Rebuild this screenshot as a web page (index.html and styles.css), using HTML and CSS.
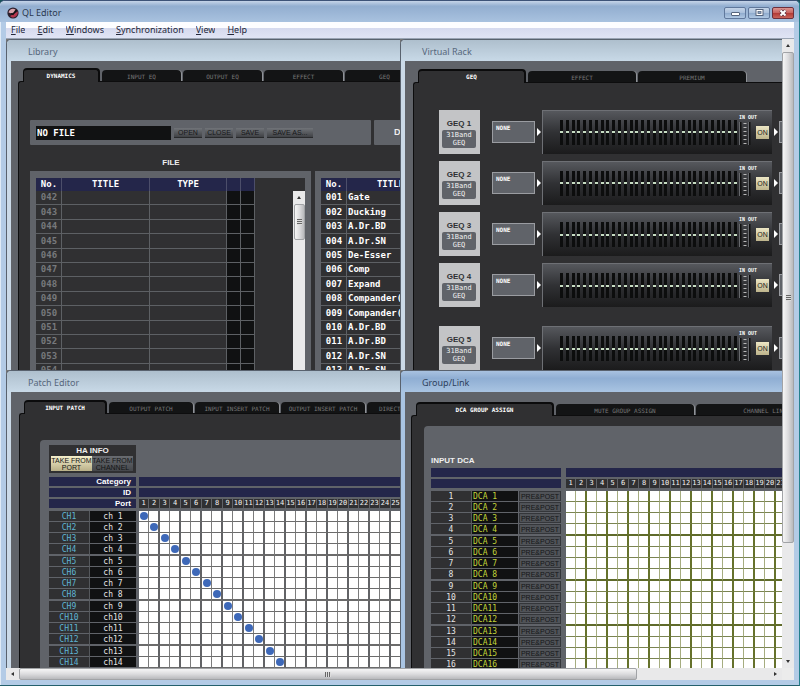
FILE: index.html
```html
<!DOCTYPE html>
<html lang="en">
<head>
<meta charset="utf-8">
<title>QL Editor</title>
<link rel="stylesheet" href="styles.css">
</head>
<body>
<div class="frame">
  <header class="titlebar">
    <svg class="app-icon" viewBox="0 0 12 12"><circle cx="6" cy="6" r="5.6" fill="#2b1f2c"/><path d="M1.500 5.500C2 2 6 .8 8.500 2.500L6.500 5.500 4.500 6.500Z" fill="#d9a3ac"/><path d="M3 9L7.500 6.500 10.800 4.500C11.200 8 8.500 11 5 10.500Z" fill="#b5344c"/><path d="M4 6.500L6 7.500 9.500 3" fill="none" stroke="#111" stroke-width="1.200"/></svg>
    <h1>QL Editor</h1>
    <div class="controls">
      <button class="ctl" aria-label="Minimize"><svg viewBox="0 0 20 10"><rect x="6.500" y="4.500" width="8" height="3" rx=".5" fill="#fff" stroke="#56657e"/></svg></button>
      <button class="ctl" aria-label="Maximize"><svg viewBox="0 0 20 10"><rect x="7" y="1.500" width="7" height="6" fill="#fff" stroke="#56657e"/><rect x="9" y="3.500" width="3" height="2" fill="#8fa6c4" stroke="#56657e" stroke-width=".8"/></svg></button>
      <button class="ctl close" aria-label="Close"><svg viewBox="0 0 20 10"><path d="M7.500 2.500L12.500 7.500M12.500 2.500L7.500 7.500" stroke="#5a3040" stroke-width="3.400"/><path d="M7.500 2.500L12.500 7.500M12.500 2.500L7.500 7.500" stroke="#fff" stroke-width="2"/></svg></button>
    </div>
  </header>
  <nav class="menu">
    <button><u>F</u>ile</button><button><u>E</u>dit</button><button><u>W</u>indows</button><button><u>S</u>ynchronization</button><button><u>V</u>iew</button><button><u>H</u>elp</button>
  </nav>
  <div class="workarea">
    <main class="mdi">
      <section class="win library">
        <h2>Library</h2>
        <div class="content">
          <div class="tabs"><button class="on">DYNAMICS</button><button>INPUT EQ</button><button>OUTPUT EQ</button><button>EFFECT</button><button>GEQ</button></div>
          <div class="body">
            <div class="filebar">
              <div class="bar file-group">
                <input aria-label="File name" value="NO FILE" readonly>
                <button>OPEN</button><button>CLOSE</button><button>SAVE</button><button class="wide">SAVE AS...</button>
              </div>
              <div class="bar device">D</div>
            </div>
            <h3>FILE</h3>
            <div class="lists">
              <div class="list-panel">
                <div class="list-inner">
                  <table class="list empty">
                    <colgroup><col class="no"><col class="ti"><col class="ty"><col class="mk"><col class="mk"></colgroup>
                    <thead><tr><th>No.</th><th>TITLE</th><th>TYPE</th><th></th><th></th></tr></thead>
                    <tbody id="fileRows"></tbody>
                  </table>
                  <div class="vscroll small"><span class="arrow up"></span><span class="thumb"></span></div>
                </div>
              </div>
              <div class="list-panel second">
                <table class="list full">
                  <colgroup><col class="no"><col class="ti"></colgroup>
                  <thead><tr><th>No.</th><th>TITLE</th></tr></thead>
                  <tbody id="libRows"></tbody>
                </table>
              </div>
            </div>
          </div>
        </div>
      </section>

      <section class="win rack">
        <h2>Virtual Rack</h2>
        <div class="content">
          <div class="tabs"><button class="on">GEQ</button><button>EFFECT</button><button>PREMIUM</button></div>
          <div class="body" id="racks"></div>
        </div>
      </section>

      <section class="win patch">
        <h2>Patch Editor</h2>
        <div class="content">
          <div class="tabs"><button class="on">INPUT PATCH</button><button>OUTPUT PATCH</button><button>INPUT INSERT PATCH</button><button>OUTPUT INSERT PATCH</button><button class="cut">DIRECT</button></div>
          <div class="body">
            <div class="sheet">
              <div class="ha">
                <h3>HA INFO</h3>
                <div class="ha-buttons"><button class="lit">TAKE FROM<br>PORT</button><button>TAKE FROM<br>CHANNEL</button></div>
              </div>
              <table class="matrix" id="patchMatrix"></table>
            </div>
          </div>
        </div>
      </section>

      <section class="win group active">
        <h2>Group/Link</h2>
        <div class="content">
          <div class="tabs"><button class="on">DCA GROUP ASSIGN</button><button>MUTE GROUP ASSIGN</button><button>CHANNEL LINK</button></div>
          <div class="body">
            <div class="sheet">
              <h3>INPUT DCA</h3>
              <table class="matrix olive" id="dcaMatrix"></table>
            </div>
          </div>
        </div>
      </section>
    </main>
    <div class="vscroll main"><span class="arrow up"></span><span class="thumb"></span><span class="track"></span><span class="arrow down"></span></div>
    <div class="hscroll"><span class="arrow left"></span><span class="thumb"></span><span class="track"></span><span class="arrow right"></span></div>
    <div class="corner"></div>
  </div>
</div>
<script src="main.js"></script>
</body>
</html>
```
FILE: styles.css
```css
* { box-sizing: border-box; }
html, body { height: 100%; }
body { margin: 0; background: #17505a; font-family: "Liberation Sans", Arial, sans-serif; overflow: hidden; }
h1, h2, h3 { margin: 0; font-weight: normal; }
button { margin: 0; padding: 0; border: 0; background: none; font: inherit; color: inherit; white-space: nowrap; overflow: hidden; }
table { border-collapse: separate; border-spacing: 0; table-layout: fixed; }
td, th { padding: 0; white-space: nowrap; overflow: hidden; }

.frame { height: 100%; display: flex; flex-direction: column; padding: 0 5px 5px 6px; background: #b3cbe6; border: 1px solid #3d5378; border-left: 0; border-right-color: #24808c; border-bottom-color: #24606c; border-radius: 5px 5px 0 0; box-shadow: inset 1px 1px 0 #dfeaf6; }
.titlebar { flex: none; height: 21px; margin: 0 -5px 0 -6px; padding: 3px 5px 0 6px; display: flex; align-items: center; background: linear-gradient(#c5d4e8, #92aed0 25%, #a9c2df); border-radius: 5px 5px 0 0; }
.app-icon { width: 12px; height: 12px; margin: 0 3px 0 1px; }
.titlebar h1 { flex: 1; font: 9px/16px "Noto Sans", sans-serif; color: #2b3950; }
.controls { display: flex; gap: 2px; }
.ctl { width: 22px; height: 12px; border: 1px solid #60789c; border-radius: 2px; background: linear-gradient(#c4d4e8, #a9bfdb 50%, #8eaacd 50%, #b0c8e3); }
.ctl svg { display: block; width: 20px; height: 10px; }
.ctl.close { border-color: #6d2f3c; background: linear-gradient(#dc9490, #c7605d 50%, #b13834 50%, #c9635a); }

.menu { flex: none; height: 17px; padding-left: 5px; display: flex; gap: 12px; align-items: center; background: linear-gradient(#fdfdff 35%, #d6daee 38%, #e0e4f4); border-bottom: 1px solid #9aa4b4; font: 9px/14px "Noto Sans", sans-serif; color: #24283a; }

.workarea { flex: 1; min-height: 0; display: grid; grid-template: minmax(0, 1fr) 12px / minmax(0, 1fr) 12px; }
.mdi { display: grid; grid-template: 331fr 298fr / 394fr 382fr; min-height: 0; overflow: hidden; background: #777; }
.win { min-width: 0; min-height: 0; overflow: hidden; display: flex; flex-direction: column; padding-left: 4px; background: #cbdae8; border: 1px solid #59626e; border-width: 1px 0 0 1px; border-top-left-radius: 5px; }
.win h2 { flex: none; height: 21px; margin-left: -4px; padding: 4px 0 0 21px; background: linear-gradient(#aebfcd, #c8d9e7); font: 9px/16px "Noto Sans", sans-serif; color: #56677c; }
.win.active h2 { background: linear-gradient(#a9c2e0, #8faed3 35%, #a9c4e2); color: #2c3f5c; }
.active { background: #a9c4e2; }
.content { flex: 1; min-height: 0; overflow: hidden; display: flex; flex-direction: column; background: #606369; }

.tabs { flex: none; display: flex; align-items: flex-end; gap: 2px; font: 6px/8px "DejaVu Sans Mono", monospace; }
.tabs button { flex: none; height: 11px; padding-top: 3px; background: #131415; color: #777; border-radius: 4px 4px 0 0; box-shadow: 1px 0 0 #909398; }
.tabs .on { position: relative; height: 14px; margin-bottom: -1px; padding: 0; background: #303032; color: #fff; font-weight: bold; border: 1px solid #0b0b0c; border-width: 2px 2px 0 1px; box-shadow: none; }
.body { flex: 1; min-height: 0; overflow: hidden; background: #303032; border: 1px solid #0d0d0e; border-width: 1px 0 0 1px; border-top-left-radius: 3px; }

/* Library */
.library .tabs { height: 20px; padding-left: 12px; }
.library .tabs button { width: 79px; }
.library .tabs .on { width: 77px; }
.library .body { margin-left: 7px; padding: 38px 0 0 11px; }
.filebar { display: flex; gap: 3px; }
.bar { flex: none; height: 25px; background: #606369; border-radius: 1px; }
.file-group { width: 341px; display: flex; align-items: center; gap: 3px; padding-left: 6px; }
.file-group input { width: 135px; height: 14px; margin: 0; padding: 0 1px; border: 0; background: #111213; color: #fff; font: bold 9px/14px "DejaVu Sans Mono", monospace; }
.file-group button { width: 28px; height: 10px; background: linear-gradient(#707378, #404246); color: #17181a; font-size: 7px; line-height: 9px; border-bottom: 1px solid #28292b; }
.file-group .wide { width: 46px; }
.device { width: 60px; padding-left: 20px; font: bold 9px/25px "Liberation Sans", sans-serif; color: #eee; }
.library h3 { width: 282px; padding: 13px 0 3px; text-align: center; font: bold 8px/10px "Liberation Sans", sans-serif; color: #eee; }
.lists { display: flex; gap: 4px; }
.list-panel { flex: none; width: 281px; height: 240px; padding: 7px 6px 0; background: #606369; }
.list-inner { height: 100%; display: flex; justify-content: space-between; background: #303032; }
.list { font: bold 9px/13px "DejaVu Sans Mono", monospace; color: #fff; background: #303032; align-self: flex-start; }
.list th { height: 13px; background: #24264a; border-right: 1px solid #4c4e6a; }
.list td { height: 14px; line-height: 13px; border-right: 1px solid #5d6064; border-bottom: 1px solid #5d6064; }
.list tr:nth-child(5n+2) td, .list tr:nth-child(5n+4) td { height: 15px; line-height: 14px; }
.list td:first-child { text-align: center; }
.list .no { width: 26px; }
.list .ti { width: 88px; }
.list .ty { width: 77px; }
.list .mk { width: 14px; }
.list tr > :first-child { padding-left: 1px; }
.empty { width: 219px; color: #77797c; }
.empty th { color: #fff; }
.empty td:nth-child(n+4) { background: #101112; }
.full { width: 114px; }
.full td:nth-child(2) { padding-left: 1px; }

/* Virtual Rack */
.rack .tabs { height: 21px; padding-left: 13px; }
.rack .tabs button { width: 108px; }
.rack .body { margin-left: 8px; padding: 27px 0 0 25px; display: flex; flex-direction: column; gap: 7px; }
.unit { flex: none; display: flex; align-items: center; height: 44px; }
.unit > * { flex: none; }
.unit:last-child { margin-top: 12px; }
.badge { width: 41px; height: 44px; padding: 9px 4px 0 3px; background: #c3c4c6; text-align: center; font: bold 8px/9px "Liberation Sans", sans-serif; color: #2e3033; }
.badge span { display: block; margin-top: 2px; height: 18px; padding-top: 1px; background: #606369; border-radius: 2px; color: #f2f2f2; font: 7px/8px "DejaVu Sans Mono", monospace; }
.source { width: 43px; height: 22px; margin: 0 2px 0 12px; padding: 2px 3px; border: 1px solid #9a9ca1; background: #606369; color: #fff; font: bold 6px/7px "DejaVu Sans Mono", monospace; text-align: left; display: flex; }
.tri { width: 0; height: 0; border: 4px solid transparent; border-left: 4px solid #fff; border-right: 0; margin-right: 1px; }
.eq { width: 230px; height: 44px; padding: 4px 3px 0 17px; display: flex; background: linear-gradient(#56585d, #303134 50%, #1b1b1c); border: 1px solid #6e7075; border-bottom: 0; border-right: 0; }
.eq > * { flex: none; }
.faders { width: 177px; height: 25px; margin-top: 5px; display: flex; justify-content: space-between; }
.faders i { width: 3px; background: linear-gradient(#0c0d0d 46%, #c6dcc2 46%, #c6dcc2 54%, #0c0d0d 54%); }
.meter { width: 18px; margin: 0 0 0 2px; color: #fff; font: bold 5px/6px "Liberation Mono", monospace; white-space: nowrap; }
.meter svg { display: block; width: 12px; height: 24px; margin-top: 1px; }
.eq button { width: 13px; height: 13px; margin: 11px 0 0 -1px; background: linear-gradient(#ece6c4, #bdb48c); color: #24221a; font-size: 7px; }
.out { width: 43px; height: 22px; border: 1px solid #9a9ca1; background: #606369; }
.tri.end { margin-left: 2px; }

/* Matrices */
.sheet { overflow: hidden; background: #606369; border-top-left-radius: 4px; height: 100%; }
.matrix { color: #e6e6e6; font: 7px/9px "DejaVu Sans Mono", monospace; }
.matrix td, .matrix th { height: 11px; border-bottom: 1px solid #606369; font-weight: normal; }
.matrix thead th { background: #24264a; border-bottom-width: 2px; }
.matrix thead th.gap, .matrix td.gap { background: #606369; }
.matrix thead th.label { padding-right: 5px; text-align: right; font: bold 8px/9px "Liberation Sans", sans-serif; color: #fff; }
.matrix thead th.port { background: #303032; border-right: 1px solid #606369; color: #f4f4f4; text-align: center; text-overflow: clip; }
.matrix tr.lead td { height: 1px; border: 0; }
.matrix tr.quad td { height: 12px; border-bottom-width: 2px; }
.matrix .ch, .matrix .nm { font-size: 8px; }
.matrix .ch { background: #303032; text-align: center; border-right: 1px solid #55585c; }
.matrix .nm { background: #101112; text-align: center; }
.matrix .x { background: #fff; border-right: 1px solid #7c7c7c; border-bottom-color: #6b6b6b; }
.matrix .pair { border-right: 2px solid #626366; }
.c0 { width: 41px; }
.c1 { width: 46px; }
.cb { width: 43px; }
.cg { width: 3px; }
.odd { width: 10px; }
.even { width: 11px; }
.dot { display: block; width: 8px; height: 8px; margin: 0 auto; border-radius: 50%; background: #3d68b8; }

/* Patch Editor */
.patch .tabs { height: 21px; padding-left: 13px; }
.patch .tabs button { width: 84px; }
.patch .tabs .on { width: 83px; }
.patch .tabs .cut { padding-left: 12px; text-align: left; }
.patch .body { margin-left: 8px; padding: 26px 0 0 20px; }
.patch .sheet { padding: 5px 0 0 9px; }
.ha { width: 87px; height: 28px; margin-bottom: 4px; padding: 1px 2px 0; background: #303032; }
.ha h3 { height: 10px; text-align: center; font: bold 8px/10px "Liberation Sans", sans-serif; color: #eee; }
.ha-buttons { display: flex; }
.ha-buttons button { width: 41px; height: 15px; background: linear-gradient(#696c71, #45474b); color: #141516; font: 7px/7px "Liberation Sans", sans-serif; }
.ha-buttons .lit { background: linear-gradient(#f4eecb, #b9b088); }
#patchMatrix { width: 468px; }
#patchMatrix .ch { color: #5fb4d2; }

/* Group/Link */
.group .tabs { height: 23px; padding-left: 11px; }
.group .tabs button { width: 138px; }
.group .body { margin-left: 6px; padding: 10px 0 0 12px; }
.group .sheet { padding: 30px 0 0 7px; }
.group h3 { height: 12px; font: bold 8px/10px "Liberation Sans", sans-serif; color: #f0f0f0; }
#dcaMatrix { width: 387px; }
#dcaMatrix .cg { width: 5px; }
.olive .nm { color: #c3d43a; text-align: left; padding-left: 1px; }
.olive .x { border-right-color: #a6ad80; border-bottom-color: #7a8450; }
.olive .pair { border-right-color: #66722c; }
.olive .quad .x { border-bottom-color: #5f6b2a; }
.olive .btn { background: #606369; vertical-align: top; }
.olive .btn button { display: block; width: 42px; height: 10px; margin-left: 1px; background: #505358; border: 1px solid #34363a; color: #141517; font: 7px/7px "Liberation Sans", sans-serif; }

/* Scroll bars */
.vscroll, .hscroll { display: flex; background: #e9e9ea; }
.vscroll { flex-direction: column; width: 12px; }
.hscroll { height: 12px; }
.corner { background: #ececec; }
.arrow { flex: none; width: 12px; height: 13px; display: grid; place-items: center; }
.arrow::before { content: ""; border: 2px solid transparent; }
.arrow.up::before { border-bottom: 3px solid #333; border-top: 0; }
.arrow.down::before { border-top: 3px solid #333; border-bottom: 0; }
.hscroll .arrow { width: 13px; height: 12px; }
.arrow.left::before { border-right: 3px solid #333; border-left: 0; }
.arrow.right::before { border-left: 3px solid #333; border-right: 0; }
.thumb { display: grid; place-items: center; border: 1px solid #a1a3a6; border-radius: 2px; background: linear-gradient(90deg, #f6f6f6, #dcdcde 50%, #b8b9bc); }
.thumb::before { content: ""; width: 5px; height: 6px; background: repeating-linear-gradient(#666 0 1px, #ddd 1px 2px); }
.hscroll .thumb { background: linear-gradient(#f6f6f6, #dcdcde 50%, #b8b9bc); }
.hscroll .thumb::before { width: 6px; height: 5px; background: repeating-linear-gradient(90deg, #666 0 1px, #ddd 1px 2px); }
.main .thumb { flex: 491; }
.main .track { flex: 112; }
.hscroll .thumb { flex: 618; }
.hscroll .track { flex: 132; }
.small { height: 100%; margin-top: 13px; }
.small .thumb { height: 36px; margin-left: 1px; }
```
FILE: main.js
```js
const el = id => document.getElementById(id);
const range = (n, f) => Array.from({ length: n }, (_, i) => f(i)).join("");
const pad = n => String(n).padStart(3, "0");

el("fileRows").innerHTML = range(13, i =>
  `<tr><td>${pad(42 + i)}</td><td></td><td></td><td></td><td></td></tr>`);

const library = ["Gate", "Ducking", "A.Dr.BD", "A.Dr.SN", "De-Esser", "Comp", "Expand",
  "Compander(H", "Compander(S", "A.Dr.BD", "A.Dr.BD", "A.Dr.SN", "A.Dr.SN"];
el("libRows").innerHTML = library.map((name, i) =>
  `<tr><td>${pad(i + 1)}</td><td>${name}</td></tr>`).join("");

const scale = `<svg viewBox="0 0 12 24"><path d="M1.500 0V23M10.500 0V23" stroke="#111" stroke-width="2"/><path d="M.5 0V23M9.500 0V23" stroke="#66686c"/><path d="M6 1V24" stroke="#b8b8b8" stroke-width="3" stroke-dasharray="1 3"/></svg>`;
el("racks").innerHTML = range(5, i => `
  <div class="unit">
    <div class="badge">GEQ ${i + 1}<span>31Band<br>GEQ</span></div>
    <button class="source">NONE</button><i class="tri"></i>
    <div class="eq">
      <div class="faders">${"<i></i>".repeat(31)}</div>
      <div class="meter">IN OUT${scale}</div>
      <button>ON</button>
    </div>
    <i class="tri end"></i><div class="out"></div>
  </div>`);

function matrix(opts) {
  const { cols, rows, labels, lead, rowCells, mark } = opts;
  const colgroup = `<colgroup>${lead.map(c => `<col class="${c}">`).join("")}` +
    range(cols, i => `<col class="${i % 2 ? "even" : "odd"}">`) + "</colgroup>";
  const span = lead.length - 1;
  const head = labels.map((text, i) => {
    const cells = i === labels.length - 1
      ? range(cols, c => `<th class="port">${c + 1}</th>`)
      : `<th colspan="${cols}"></th>`;
    return `<tr><th class="label" colspan="${span}">${text}</th><th class="gap"></th>${cells}</tr>`;
  }).join("");
  const body = range(rows, r => `<tr class="${r % 4 === 3 ? "quad" : ""}">${rowCells(r)}<td class="gap"></td>` +
    range(cols, c => `<td class="x ${c % 2 ? "pair" : ""}">${mark(r, c) ? '<span class="dot"></span>' : ""}</td>`) + "</tr>");
  return `${colgroup}<thead>${head}</thead><tbody><tr class="lead"><td colspan="${span + 1 + cols}"></td></tr>${body}</tbody>`;
}

el("patchMatrix").innerHTML = matrix({
  cols: 36, rows: 14, labels: ["Category", "ID", "Port"], lead: ["c0", "c1", "cg"],
  rowCells: r => `<td class="ch">CH${r + 1}</td><td class="nm">ch${String(r + 1).padStart(2, "\u00a0")}</td>`,
  mark: (r, c) => r === c
});

el("dcaMatrix").innerHTML = matrix({
  cols: 24, rows: 16, labels: ["", ""], lead: ["c0", "c1", "cb", "cg"],
  rowCells: r => `<td class="ch">${r + 1}</td><td class="nm">DCA${String(r + 1).padStart(2, "\u00a0")}</td>` +
    `<td class="btn"><button>PRE&amp;POST</button></td>`,
  mark: () => false
});
```
